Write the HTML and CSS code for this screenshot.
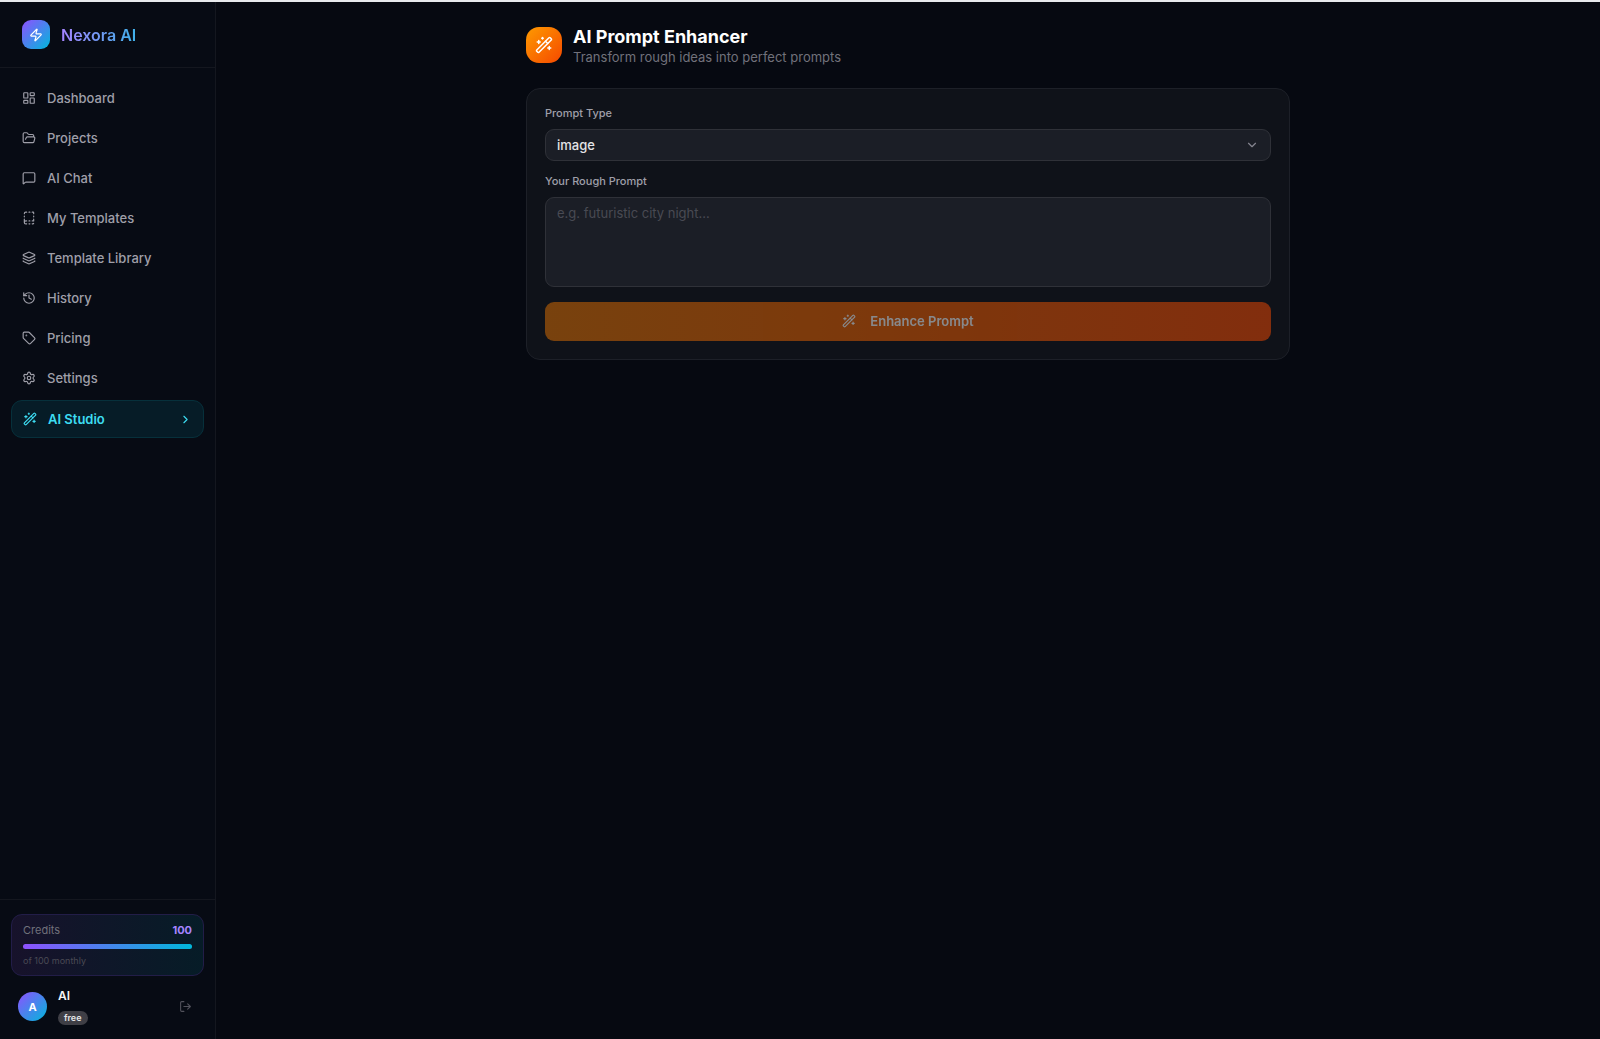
FILE: index.html
```html
<!DOCTYPE html>
<html lang="en">
<head>
  <meta charset="UTF-8">
  <meta name="viewport" content="width=device-width, initial-scale=1.0">
  <title>Nexora AI - Prompt Enhancer</title>
  <link rel="stylesheet" href="styles.css">
</head>
<body>

  <svg class="sprite" aria-hidden="true">
    <symbol id="wand" viewBox="0 0 24 24">
      <path d="m21.64 3.64-1.28-1.28a1.21 1.21 0 0 0-1.72 0L2.36 18.64a1.21 1.21 0 0 0 0 1.72l1.28 1.28a1.2 1.2 0 0 0 1.72 0L21.64 5.36a1.2 1.2 0 0 0 0-1.72"/>
      <path d="m14 7 3 3M5 6v4M19 14v4M10 2v2M7 8H3M21 16h-4M11 3H9"/>
    </symbol>
  </svg>

  <aside class="sidebar">
    <div class="brand">
      <span class="brand-icon">
        <svg class="icon" viewBox="0 0 24 24"><path d="M4 14a1 1 0 0 1-.78-1.63l9.9-10.2a.5.5 0 0 1 .86.46l-1.92 6.02A1 1 0 0 0 13 10h7a1 1 0 0 1 .78 1.63l-9.9 10.2a.5.5 0 0 1-.86-.46l1.92-6.02A1 1 0 0 0 11 14z"/></svg>
      </span>
      <span class="brand-name">Nexora AI</span>
    </div>

    <nav class="nav">
      <a class="nav-link" href="#">
        <svg class="icon" viewBox="0 0 24 24"><rect width="7" height="9" x="3" y="3" rx="1"/><rect width="7" height="5" x="14" y="3" rx="1"/><rect width="7" height="9" x="14" y="12" rx="1"/><rect width="7" height="5" x="3" y="16" rx="1"/></svg>
        <span>Dashboard</span>
      </a>
      <a class="nav-link" href="#">
        <svg class="icon" viewBox="0 0 24 24"><path d="m6 14 1.5-2.9A2 2 0 0 1 9.24 10H20a2 2 0 0 1 1.94 2.5l-1.54 6a2 2 0 0 1-1.95 1.5H4a2 2 0 0 1-2-2V5a2 2 0 0 1 2-2h3.9a2 2 0 0 1 1.69.9l.81 1.2a2 2 0 0 0 1.67.9H18a2 2 0 0 1 2 2v2"/></svg>
        <span>Projects</span>
      </a>
      <a class="nav-link" href="#">
        <svg class="icon" viewBox="0 0 24 24"><path d="M22 17a2 2 0 0 1-2 2H6.828a2 2 0 0 0-1.414.586l-2.202 2.202A.71.71 0 0 1 2 21.286V5a2 2 0 0 1 2-2h16a2 2 0 0 1 2 2z"/></svg>
        <span>AI Chat</span>
      </a>
      <a class="nav-link" href="#">
        <svg class="icon" viewBox="0 0 24 24"><path d="M12 17h1.5M12 22h1.5M12 2h1.5M17.5 22H19a1 1 0 0 0 1-1M17.5 2H19a1 1 0 0 1 1 1v1.5M20 14v3h-2.5M20 8.5V10M4 10V8.5M4 19.5V14M4 4.5A2.5 2.5 0 0 1 6.5 2H8M8 22H6.5a1 1 0 0 1 0-5H8"/></svg>
        <span>My Templates</span>
      </a>
      <a class="nav-link" href="#">
        <svg class="icon" viewBox="0 0 24 24"><path d="M12.83 2.18a2 2 0 0 0-1.66 0L2.6 6.08a1 1 0 0 0 0 1.83l8.58 3.91a2 2 0 0 0 1.66 0l8.58-3.9a1 1 0 0 0 0-1.83z"/><path d="M2 12a1 1 0 0 0 .58.91l8.6 3.91a2 2 0 0 0 1.65 0l8.58-3.9A1 1 0 0 0 22 12"/><path d="M2 17a1 1 0 0 0 .58.91l8.6 3.91a2 2 0 0 0 1.65 0l8.58-3.9A1 1 0 0 0 22 17"/></svg>
        <span>Template Library</span>
      </a>
      <a class="nav-link" href="#">
        <svg class="icon" viewBox="0 0 24 24"><path d="M3 12a9 9 0 1 0 9-9 9.75 9.75 0 0 0-6.74 2.74L3 8"/><path d="M3 3v5h5M12 7v5l4 2"/></svg>
        <span>History</span>
      </a>
      <a class="nav-link" href="#">
        <svg class="icon" viewBox="0 0 24 24"><path d="M12.586 2.586A2 2 0 0 0 11.172 2H4a2 2 0 0 0-2 2v7.172a2 2 0 0 0 .586 1.414l8.704 8.704a2.426 2.426 0 0 0 3.42 0l6.58-6.58a2.426 2.426 0 0 0 0-3.42z"/><circle cx="7.5" cy="7.5" r=".5" fill="currentColor"/></svg>
        <span>Pricing</span>
      </a>
      <a class="nav-link" href="#">
        <svg class="icon" viewBox="0 0 24 24"><path d="M9.671 4.136a2.34 2.34 0 0 1 4.659 0 2.34 2.34 0 0 0 3.319 1.915 2.34 2.34 0 0 1 2.33 4.033 2.34 2.34 0 0 0 0 3.831 2.34 2.34 0 0 1-2.33 4.033 2.34 2.34 0 0 0-3.319 1.915 2.34 2.34 0 0 1-4.659 0 2.34 2.34 0 0 0-3.32-1.915 2.34 2.34 0 0 1-2.33-4.033 2.34 2.34 0 0 0 0-3.831A2.34 2.34 0 0 1 6.35 6.051a2.34 2.34 0 0 0 3.319-1.915"/><circle cx="12" cy="12" r="3"/></svg>
        <span>Settings</span>
      </a>
      <a class="nav-link active" href="#" aria-current="page">
        <svg class="icon"><use href="#wand"/></svg>
        <span>AI Studio</span>
        <svg class="icon nav-arrow" viewBox="0 0 24 24"><path d="m9 18 6-6-6-6"/></svg>
      </a>
    </nav>

    <div class="sidebar-footer">
      <div class="credits">
        <div class="credits-row">
          <span>Credits</span>
          <strong>100</strong>
        </div>
        <div class="bar"><div class="bar-fill" style="width: 100%"></div></div>
        <p class="credits-note">of 100 monthly</p>
      </div>
      <div class="user">
        <span class="avatar">A</span>
        <div class="user-info">
          <span class="user-name">AI</span>
          <span class="plan">free</span>
        </div>
        <button class="logout" type="button" aria-label="Log out">
          <svg class="icon" viewBox="0 0 24 24"><path d="m16 17 5-5-5-5M21 12H9M9 21H5a2 2 0 0 1-2-2V5a2 2 0 0 1 2-2h4"/></svg>
        </button>
      </div>
    </div>
  </aside>

  <main class="main">
    <div class="content">
      <header class="page-header">
        <span class="page-icon"><svg class="icon"><use href="#wand"/></svg></span>
        <div>
          <h1>AI Prompt Enhancer</h1>
          <p>Transform rough ideas into perfect prompts</p>
        </div>
      </header>

      <form class="card">
        <label for="promptType">Prompt Type</label>
        <div class="select-wrap">
          <select id="promptType">
            <option>image</option>
          </select>
          <svg class="icon" viewBox="0 0 24 24"><path d="m6 9 6 6 6-6"/></svg>
        </div>

        <label for="roughPrompt">Your Rough Prompt</label>
        <textarea id="roughPrompt" placeholder="e.g. futuristic city night..."></textarea>

        <button class="enhance" type="submit" disabled>
          <svg class="icon"><use href="#wand"/></svg>
          Enhance Prompt
        </button>
      </form>
    </div>
  </main>

</body>
</html>
```

FILE: styles.css
```css
* {
  box-sizing: border-box;
}

body {
  margin: 0;
  min-height: 100vh;
  display: flex;
  background: #060911;
  border-top: 2px solid #e8eaed;
  font-family: Inter, sans-serif;
  font-size: 13px;
  line-height: 18px;
  color: #f4f4f5;
}

h1, p {
  margin: 0;
}

.sprite {
  position: absolute;
  width: 0;
  height: 0;
}

.icon {
  width: 14px;
  height: 14px;
  flex-shrink: 0;
  fill: none;
  stroke: currentColor;
  stroke-width: 2;
  stroke-linecap: round;
  stroke-linejoin: round;
}

/* Sidebar */
.sidebar {
  width: 216px;
  flex-shrink: 0;
  display: flex;
  flex-direction: column;
  background: #070b14;
  border-right: 1px solid #14171f;
}

.brand {
  display: flex;
  align-items: center;
  gap: 11px;
  padding: 18px 22px;
  border-bottom: 1px solid #14171f;
}

.brand-icon {
  display: grid;
  place-items: center;
  width: 28px;
  height: 29px;
  border-radius: 9px;
  background: linear-gradient(135deg, #8e51ff, #00b8db);
  color: #fff;
}

.brand-name {
  font-size: 16px;
  font-weight: 600;
  background: linear-gradient(90deg, #a684ff, #3fb0ea);
  background-clip: text;
  -webkit-background-clip: text;
  color: transparent;
}

.nav {
  flex: 1;
  display: flex;
  flex-direction: column;
  gap: 4px;
  padding: 12px 11px;
}

.nav-link {
  display: flex;
  align-items: center;
  gap: 11px;
  padding: 9px 11px;
  border-radius: 11px;
  color: #9f9fa9;
  font-weight: 500;
  text-decoration: none;
}

.nav-link.active {
  border: 1px solid #06303b;
  background: #061c27;
  color: #3ddcf2;
  font-weight: 600;
}

.nav-arrow {
  width: 13px;
  height: 13px;
  margin-left: auto;
}

.sidebar-footer {
  padding: 14px 11px;
  border-top: 1px solid #14171f;
}

.credits {
  padding: 6px 11px 8px;
  border: 1px solid #221d48;
  border-radius: 11px;
  background: linear-gradient(90deg, #17122b, #061c27);
}

.credits-row {
  display: flex;
  justify-content: space-between;
  color: #71717b;
  font-size: 11px;
}

.credits-row strong {
  color: #a684ff;
  font-weight: 700;
}

.bar {
  height: 5px;
  margin: 5px 0;
  border-radius: 5px;
  background: #27272a;
}

.bar-fill {
  height: 100%;
  border-radius: 5px;
  background: linear-gradient(90deg, #8e51ff, #00b8db);
}

.credits-note {
  color: #4a4a54;
  font-size: 9px;
  line-height: 13px;
}

.user {
  display: flex;
  align-items: center;
  gap: 11px;
  padding: 12px 7px 0;
}

.avatar {
  display: grid;
  place-items: center;
  width: 29px;
  height: 29px;
  border-radius: 50%;
  background: linear-gradient(135deg, #8e51ff, #00b8db);
  color: #fff;
  font-size: 11px;
  font-weight: 700;
}

.user-info {
  flex: 1;
  display: flex;
  flex-direction: column;
  align-items: flex-start;
  gap: 7px;
}

.user-name {
  font-size: 12px;
  font-weight: 600;
  line-height: 16px;
}

.plan {
  padding: 0 6px;
  border-radius: 7px;
  background: #3f3f46;
  font-size: 9px;
  font-weight: 600;
  line-height: 14px;
  color: #e4e4e7;
}

.logout {
  display: flex;
  padding: 5px;
  border: 0;
  background: none;
  color: #52525c;
}

.logout .icon {
  width: 13px;
  height: 13px;
}

/* Page */
.main {
  flex: 1;
  padding: 23px 22px;
}

.content {
  max-width: 764px;
  margin: 0 auto;
}

.page-header {
  display: flex;
  align-items: center;
  gap: 11px;
  margin-bottom: 23px;
}

.page-icon {
  display: grid;
  place-items: center;
  width: 36px;
  height: 36px;
  border-radius: 13px;
  background: linear-gradient(135deg, #fe9a00, #f54900);
  color: #fff;
}

.page-icon .icon {
  width: 18px;
  height: 18px;
}

.page-header h1 {
  font-size: 18px;
  font-weight: 700;
  line-height: 24px;
  color: #fff;
}

.page-header p {
  color: #71717b;
  line-height: 16px;
}

.card {
  display: flex;
  flex-direction: column;
  padding: 18px;
  border: 1px solid #1d2028;
  border-radius: 14px;
  background: #0f1219;
}

.card label {
  margin-bottom: 9px;
  color: #9f9fa9;
  font-size: 11px;
  font-weight: 500;
  line-height: 13px;
}

.select-wrap {
  display: grid;
  align-items: center;
  margin-bottom: 14px;
}

.select-wrap select,
.select-wrap .icon {
  grid-area: 1 / 1;
}

.select-wrap .icon {
  justify-self: end;
  margin-right: 12px;
  color: #85858f;
  pointer-events: none;
}

select,
textarea {
  width: 100%;
  border: 1px solid #2f3138;
  border-radius: 9px;
  background: #1b1e26;
  color: #e4e4e7;
  font: inherit;
}

select {
  height: 32px;
  padding: 0 11px;
  appearance: none;
  font-weight: 500;
}

textarea {
  height: 90px;
  margin-bottom: 15px;
  padding: 6px 11px;
  resize: none;
}

textarea::placeholder {
  color: #494a53;
}

.enhance {
  display: flex;
  align-items: center;
  justify-content: center;
  gap: 14px;
  height: 39px;
  padding: 0 6px 2px;
  border: 0;
  border-radius: 9px;
  background: linear-gradient(90deg, #e17100, #f54900);
  color: #fff;
  font: inherit;
  font-weight: 600;
}

.enhance:disabled {
  opacity: 0.5;
}
```
